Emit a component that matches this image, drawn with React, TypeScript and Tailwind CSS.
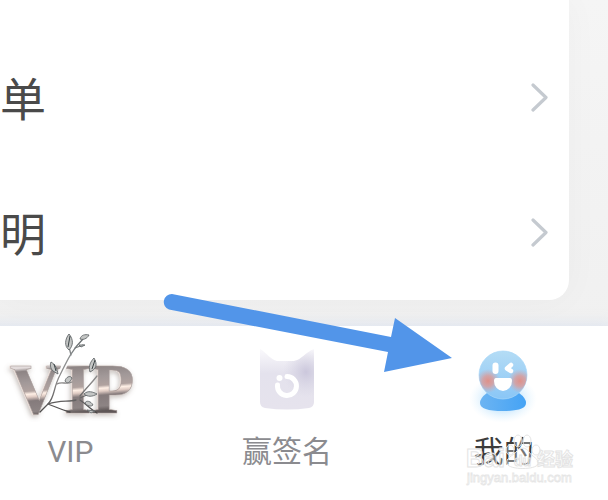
import React from "react";

const rows = ["单", "明"];

function Chevron() {
  return (
    <svg className="h-[30px] w-5" viewBox="0 0 20 30" fill="none" aria-hidden="true">
      <path d="M4 2 L17 14.5 L4 27" stroke="#c5cad0" strokeWidth="3.2" strokeLinecap="round" strokeLinejoin="round" />
    </svg>
  );
}

function VipLogo() {
  return (
    <svg className="h-[92px] w-[140px] overflow-visible" viewBox="0 0 140 92" aria-hidden="true">
      <defs>
        <linearGradient id="metal" gradientUnits="userSpaceOnUse" x1="60" y1="33" x2="64" y2="82">
          <stop offset="0" stopColor="#e3dcdc" />
          <stop offset="0.07" stopColor="#8d8484" />
          <stop offset="0.3" stopColor="#a29999" />
          <stop offset="0.48" stopColor="#b0a29f" />
          <stop offset="0.54" stopColor="#fff0e6" />
          <stop offset="0.6" stopColor="#e0ccc4" />
          <stop offset="0.68" stopColor="#857b7c" />
          <stop offset="0.9" stopColor="#8d8484" />
          <stop offset="1" stopColor="#5e5656" />
        </linearGradient>
        <linearGradient id="twig" gradientUnits="userSpaceOnUse" x1="60" y1="4" x2="60" y2="84">
          <stop offset="0" stopColor="#565d5f" />
          <stop offset="0.3" stopColor="#8f9293" />
          <stop offset="0.6" stopColor="#8a8888" />
          <stop offset="1" stopColor="#474545" />
        </linearGradient>
        <filter id="bevel" x="-20%" y="-20%" width="140%" height="140%">
          <feDropShadow dx="-1" dy="0" stdDeviation="0.4" floodColor="#e9dcd6" floodOpacity="0.9" result="shine" />
          <feDropShadow in="shine" dx="-1" dy="2" stdDeviation="2.6" floodColor="#7d6a62" floodOpacity="0.45" />
        </filter>
      </defs>
      <text
        x="10 64 91"
        y="81"
        fontFamily="Liberation Serif, serif"
        fontSize="71"
        fontWeight="700"
        fill="url(#metal)"
        stroke="#a69a98"
        strokeWidth="0.5"
        filter="url(#bevel)"
      >
        VIP
      </text>
      <g transform="translate(0 -2)">
        <path d="M70 26 C65 36 59 43 56 54 C52 64 54 70 48 74" fill="none" stroke="#fff" strokeWidth="5" strokeLinecap="round" opacity="0.85" />
        <g fill="none" stroke="url(#twig)" strokeWidth="1.3" strokeLinecap="round">
          <path d="M83 9 C71 21 67 31 60 45 C53 58 55 67 48 74 L40 82" />
          <path d="M71 25 L69 17 M75 18 L83 15" />
          <path d="M57 54 C62 51 66 55 72 52 M48 74 C60 70 68 72 76 70 M48 74 C56 77 62 80 70 82" />
          <path d="M80 66 C87 57 91 54 97 46 M80 68 L91 63 M80 70 C86 74 90 79 97 83" />
        </g>
        <g fill="#c4c6c5" stroke="#63686a" strokeWidth="0.9">
          <path d="M69 20 C64 16 65 9 69 4 C74 10 73 16 69 20Z" />
          <path d="M80 9 C81 5 85 4 89 5 C87 9 83 10 80 9Z" />
          <path d="M79 15 L85 15 L81 17Z" />
          <path d="M90 42 C88 36 91 31 94 28 C98 35 96 39 90 42Z" />
          <path d="M53 41 C50 38 50 34 51 32 C56 35 57 39 58 44Z" />
          <path d="M84 64 C88 60 93 62 97 64 C92 67 88 67 84 64Z" />
          <path d="M65 51 C66 47 70 45 72 48 C70 53 67 54 65 51Z" />
          <path d="M85 73 C86 70 91 71 93 75 C91 77 87 76 85 73Z" />
          <path d="M87 80 L95 81 L91 83Z" />
        </g>
        <path d="M70 6 L68 17 M95 30 L92 39 M54 34 L56 41" stroke="#3d4547" strokeWidth="1" />
      </g>
    </svg>
  );
}

function SignatureIcon() {
  return (
    <svg className="h-[92px] w-[130px]" viewBox="0 0 130 92" aria-hidden="true">
      <defs>
        <linearGradient id="bag" x1="0" y1="0" x2="0" y2="1">
          <stop offset="0" stopColor="#faf9fc" />
          <stop offset="0.4" stopColor="#e4e2ed" />
          <stop offset="1" stopColor="#e6e3ed" />
        </linearGradient>
        <radialGradient id="fold" cx="0.85" cy="0.38" r="0.42">
          <stop offset="0" stopColor="#cbc7dc" />
          <stop offset="1" stopColor="#d8d6e4" stopOpacity="0" />
        </radialGradient>
        <filter id="edge"><feGaussianBlur stdDeviation="0.7" /></filter>
      </defs>
      <g filter="url(#edge)">
        <path d="M38 17 C45 21 49 28 55 29 H72 C79 28 84 20 92 17 V70 Q92 75 87 76 Q65 79 43 76 Q38 75 38 70Z" fill="url(#bag)" />
        <path d="M38 17 C45 21 49 28 55 29 H72 C79 28 84 20 92 17 V70 Q92 75 87 76 Q65 79 43 76 Q38 75 38 70Z" fill="url(#fold)" />
      </g>
      <path d="M65 44.5 A9.5 9.5 0 1 1 55.5 53" fill="none" stroke="#fff" strokeWidth="5" strokeLinecap="round" />
      <circle cx="57.5" cy="46" r="3" fill="#fff" />
    </svg>
  );
}

function ProfileIcon() {
  return (
    <svg className="h-[92px] w-[130px]" viewBox="0 0 130 92" aria-hidden="true">
      <defs>
        <linearGradient id="face" x1="0.5" y1="0" x2="0.5" y2="1">
          <stop offset="0" stopColor="#b4dcf5" />
          <stop offset="1" stopColor="#8ac6f6" />
        </linearGradient>
        <linearGradient id="body" x1="0" y1="0" x2="1" y2="0">
          <stop offset="0" stopColor="#6cb4f2" />
          <stop offset="1" stopColor="#45a3f5" />
        </linearGradient>
        <radialGradient id="cheek">
          <stop offset="0" stopColor="#df9089" />
          <stop offset="0.45" stopColor="#d99d9c" stopOpacity="0.85" />
          <stop offset="1" stopColor="#c9a9b5" stopOpacity="0" />
        </radialGradient>
        <radialGradient id="halo">
          <stop offset="0.4" stopColor="#9bd3fb" stopOpacity="0.6" />
          <stop offset="1" stopColor="#d4eefe" stopOpacity="0" />
        </radialGradient>
        <clipPath id="head"><circle cx="64" cy="43" r="24" /></clipPath>
      </defs>
      <ellipse cx="64" cy="67" rx="34" ry="24" fill="url(#halo)" />
      <path d="M48 61 H80 Q87 66 87 71 Q87 79 64 79 Q41 79 41 71 Q41 66 48 61Z" fill="url(#body)" />
      <circle cx="64" cy="43" r="24" fill="url(#face)" stroke="#a9d7f8" strokeWidth="0.7" />
      <g clipPath="url(#head)">
        <circle cx="49" cy="49" r="12" fill="url(#cheek)" />
        <circle cx="81" cy="49" r="12" fill="url(#cheek)" />
      </g>
      <path d="M56.5 33.5 V39" fill="none" stroke="#fff" strokeWidth="6" strokeLinecap="round" />
      <path d="M72 33 L68 36.5 L72 39" fill="none" stroke="#fff" strokeWidth="4.5" strokeLinecap="round" strokeLinejoin="round" />
      <path d="M57 46 H71 Q73 46 73 49 A9 10 0 0 1 55 49 Q55 46 57 46Z" fill="#fff" />
    </svg>
  );
}

function Arrow() {
  return (
    <svg className="pointer-events-none absolute top-[288px] left-[160px] h-[88px] w-[296px]" viewBox="160 288 296 88" aria-hidden="true">
      <path d="M172 294 L391 337 L395 318 L452 358 L384 372 L388 352 L169 309.5 A8 8 0 0 1 172 294Z" fill="#5295e9" />
    </svg>
  );
}

function Watermark() {
  return (
    <svg className="pointer-events-none absolute top-[432px] left-[460px] h-[56px] w-[124px]" viewBox="0 0 124 56" aria-hidden="true">
      <g fill="#fff" fillOpacity="0.3" stroke="#e4e4e4" strokeWidth="1">
        <text x="6" y="35" fontFamily="Liberation Sans, sans-serif" fontWeight="700" fontSize="25">Bai</text>
        <path d="M47 32 C45 26 53 24 57 19 C60 15 66 15 69 20 C72 25 79 26 78 32 C76 38 50 38 47 32Z" />
        <ellipse cx="50" cy="18" rx="4" ry="5" />
        <ellipse cx="58" cy="9" rx="4" ry="6" />
        <ellipse cx="67" cy="9" rx="4" ry="6" />
        <ellipse cx="76" cy="18" rx="4" ry="5" />
        <text x="54" y="34" fontFamily="Liberation Sans, sans-serif" fontWeight="700" fontSize="14">du</text>
        <text x="77" y="34" fontFamily="Noto Sans CJK SC, sans-serif" fontWeight="700" fontSize="18">经验</text>
      </g>
      <text x="7" y="50" fontFamily="Liberation Sans, sans-serif" fontSize="13" fill="#fff" stroke="#e6e6e6" strokeWidth="0.8">jingyan.baidu.com</text>
    </svg>
  );
}

const tabs = [
  { label: "VIP", icon: <VipLogo />, color: "text-[#8b8b8f]" },
  { label: "赢签名", icon: <SignatureIcon />, color: "text-[#8b8b8f]" },
  { label: "我的", icon: <ProfileIcon />, color: "text-[#3c3c3c]" },
];

export default function App() {
  return (
    <div className="relative flex min-h-screen flex-col overflow-hidden bg-linear-to-b from-[#f5f5f5] to-[#eeeeee] font-[Roboto,'Noto_Sans_CJK_SC',sans-serif]">
      <main className="mr-[39px] mb-[26px] rounded-br-[20px] bg-white pt-[30px] shadow-[0_0_36px_rgba(0,0,0,0.03)]">
        {rows.map((row) => (
          <button key={row} type="button" className="flex h-[135px] w-full items-center justify-between pr-5 text-left text-[46px] leading-[46px] text-[#4a4a4a]">
            <span className="pt-1">{row}</span>
            <Chevron />
          </button>
        ))}
      </main>
      <nav className="relative -mr-1 -ml-[38px] grid flex-1 grid-cols-3 bg-white shadow-[0_-2px_12px_rgba(190,205,240,0.35)]">
        {tabs.map((tab) => (
          <button key={tab.label} type="button" className={`flex flex-col items-center gap-2 pt-1.5 text-[30px] leading-10 ${tab.color}`}>
            {tab.icon}
            <span>{tab.label}</span>
          </button>
        ))}
      </nav>
      <Arrow />
      <Watermark />
    </div>
  );
}
